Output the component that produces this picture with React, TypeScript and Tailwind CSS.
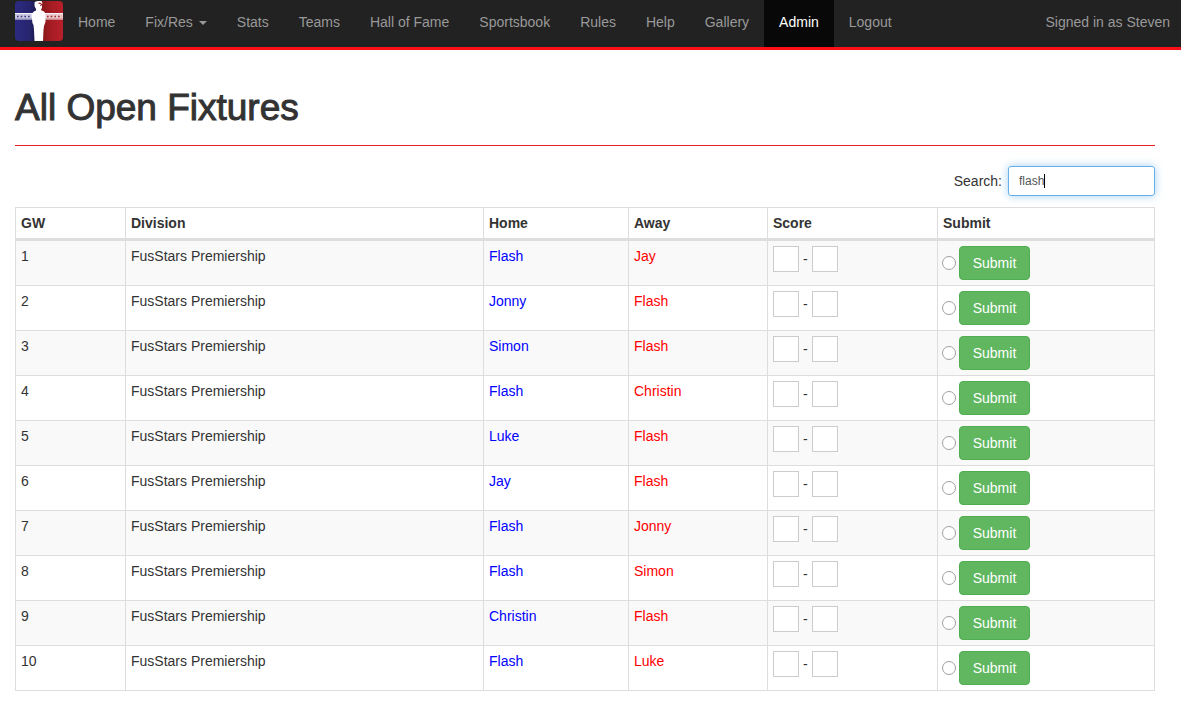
import { useState } from "react";

type NavItem = { label: string; active?: boolean; menu?: boolean };

const navItems: NavItem[] = [
  { label: "Home" },
  { label: "Fix/Res", menu: true },
  { label: "Stats" },
  { label: "Teams" },
  { label: "Hall of Fame" },
  { label: "Sportsbook" },
  { label: "Rules" },
  { label: "Help" },
  { label: "Gallery" },
  { label: "Admin", active: true },
  { label: "Logout" },
];

const fixtures = [
  { gw: 1, home: "Flash", away: "Jay" },
  { gw: 2, home: "Jonny", away: "Flash" },
  { gw: 3, home: "Simon", away: "Flash" },
  { gw: 4, home: "Flash", away: "Christin" },
  { gw: 5, home: "Luke", away: "Flash" },
  { gw: 6, home: "Jay", away: "Flash" },
  { gw: 7, home: "Flash", away: "Jonny" },
  { gw: 8, home: "Flash", away: "Simon" },
  { gw: 9, home: "Christin", away: "Flash" },
  { gw: 10, home: "Flash", away: "Luke" },
];

const columns = [
  { label: "GW", width: "w-[110px]" },
  { label: "Division", width: "w-[358px]" },
  { label: "Home", width: "w-[145px]" },
  { label: "Away", width: "w-[139px]" },
  { label: "Score", width: "w-[170px]" },
  { label: "Submit", width: "w-auto" },
];

function Logo() {
  return (
    <svg viewBox="0 0 48 40" className="h-10 w-12" aria-hidden="true">
      <defs>
        <linearGradient id="blue" x1="0" x2="1">
          <stop offset="0" stopColor="#2c2a80" />
          <stop offset="0.6" stopColor="#27256f" />
          <stop offset="1" stopColor="#14123f" />
        </linearGradient>
        <linearGradient id="red" x1="0" x2="1">
          <stop offset="0" stopColor="#7c1417" />
          <stop offset="0.5" stopColor="#a51c23" />
          <stop offset="1" stopColor="#b8202a" />
        </linearGradient>
        <clipPath id="badge">
          <rect width="48" height="40" rx="4" />
        </clipPath>
      </defs>
      <g clipPath="url(#badge)">
        <rect width="24" height="40" fill="url(#blue)" />
        <rect x="24" width="24" height="40" fill="url(#red)" />
        <path d="M0 12.5h48M0 18h48" stroke="#f3f0f6" strokeWidth="1.2" />
        <path d="M0 15.3h24" stroke="#c9c7e2" strokeWidth="4.4" />
        <path d="M24 15.3h24" stroke="#ecc9cb" strokeWidth="4.4" />
        <path d="M2 15.5h14" stroke="#34327c" strokeWidth="1.6" strokeDasharray="1.6 2.1" />
        <path d="M32 15.5h15" stroke="#a3252e" strokeWidth="1.6" strokeDasharray="1.6 2.1" />
        <path
          d="M19.5 1.5Q20 0 23 0H26.5Q28 2 27 4Q27.5 7 26 8.5L26.5 9.5Q30 10 30.5 13.5L30.5 21L29 25L28.5 29L28 40H19.5L19 29L18.5 24Q17 22 17 18L16.5 14Q17 11 21 9.5L21 8L19.5 5Z"
          fill="#fff"
        />
        <path d="M23.5 2.5Q25.5 1.5 26.5 3.5L25.5 5" fill="none" stroke="#9b1c24" strokeWidth="1.1" />
      </g>
    </svg>
  );
}

function Navbar() {
  return (
    <nav className="flex h-[50px] border-b-3 border-[#ff0f17] bg-[#222] text-[#999]">
      <a href="#" aria-label="Home page" className="mt-px ml-[15px] block shrink-0">
        <Logo />
      </a>
      <ul className="flex">
        {navItems.map((item) => (
          <li key={item.label}>
            <a
              href="#"
              className={
                item.active
                  ? "flex h-full items-start bg-[#080808] px-[15px] pt-3 whitespace-nowrap text-white"
                  : "flex h-full items-start px-[15px] pt-3 whitespace-nowrap"
              }
            >
              {item.label}
              {item.menu && (
                <svg viewBox="0 0 8 4" className="mt-[9px] ml-1.5 h-1 w-2" aria-hidden="true">
                  <path d="M0 0h8L4 4z" fill="currentColor" />
                </svg>
              )}
            </a>
          </li>
        ))}
      </ul>
      <p className="ml-auto pt-3 pr-[11px] whitespace-nowrap">Signed in as Steven</p>
    </nav>
  );
}

export default function App() {
  const [query, setQuery] = useState("flash");
  const rows = fixtures.filter((f) =>
    `${f.gw} FusStars Premiership ${f.home} ${f.away}`.toLowerCase().includes(query.toLowerCase()),
  );

  return (
    <div className="bg-white font-['Liberation_Sans',Arial,sans-serif] text-sm leading-5 text-[#333]">
      <Navbar />
      <main className="pt-[38px] pr-[26px] pb-4 pl-[15px]">
        <h1 className="border-b border-[#ee1c24] pb-[17px] text-[37px] leading-10 [-webkit-text-stroke:1px_#333]">
          All Open Fixtures
        </h1>

        <div className="mt-5 flex items-center justify-end gap-1.5">
          <label htmlFor="search">Search:</label>
          <div className="relative">
            <input
              id="search"
              type="text"
              value={query}
              onChange={(e) => setQuery(e.target.value)}
              className="block h-[30px] w-[147px] rounded-[3px] border border-[#66afe9] px-2.5 text-xs text-[#555] caret-transparent shadow-[0_0_8px_rgba(102,175,233,0.6)] outline-none"
            />
            <span className="absolute top-2 left-9 h-3.5 w-px bg-black" aria-hidden="true" />
          </div>
        </div>

        <table className="mt-[11px] w-full table-fixed border-separate border-spacing-0 border-t border-l border-[#ddd]">
          <thead>
            <tr>
              {columns.map((c) => (
                <th
                  key={c.label}
                  scope="col"
                  className={`${c.width} border-r border-b-3 border-[#ddd] p-[5px] text-left font-bold`}
                >
                  {c.label}
                </th>
              ))}
            </tr>
          </thead>
          <tbody className="[&_td]:border-r [&_td]:border-b [&_td]:border-[#ddd] [&_td]:p-[5px] [&_td]:align-top">
            {rows.map((f) => (
              <tr key={f.gw} className="odd:bg-[#f9f9f9]">
                <td>{f.gw}</td>
                <td>FusStars Premiership</td>
                <td className="text-[#0000ff]">{f.home}</td>
                <td className="text-[#ff0000]">{f.away}</td>
                <td>
                  <div className="flex items-center gap-1">
                    <input
                      type="text"
                      aria-label={`${f.home} score`}
                      className="size-[26px] border border-[#ccc] bg-white text-center"
                    />
                    <span>-</span>
                    <input
                      type="text"
                      aria-label={`${f.away} score`}
                      className="size-[26px] border border-[#ccc] bg-white text-center"
                    />
                  </div>
                </td>
                <td>
                  <div className="-ml-px flex items-center gap-[3px]">
                    <input
                      type="radio"
                      name="fixture"
                      aria-label={`Select game week ${f.gw}`}
                      className="size-3.5 appearance-none rounded-full border border-[#a0a0a0] bg-white checked:border-4"
                    />
                    <button
                      type="button"
                      className="h-[34px] min-w-[71px] rounded border border-[#50ad50] bg-[#60b760] px-3 text-white"
                    >
                      Submit
                    </button>
                  </div>
                </td>
              </tr>
            ))}
          </tbody>
        </table>
      </main>
    </div>
  );
}
